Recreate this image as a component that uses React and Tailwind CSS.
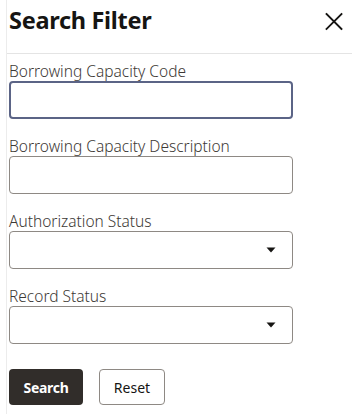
import React from "react";

function Caret() {
  return (
    <svg width="10" height="6" viewBox="0 0 10 6" className="absolute right-[16px] top-1/2 -translate-y-1/2">
      <path d="M0.5 0.5 L9.5 0.5 L5 5.5 Z" fill="#161513" />
    </svg>
  );
}

function Field({ label, select, focused }) {
  return (
    <div className="flex flex-col">
      <label className="text-[15.5px] leading-[19px] text-[#3d3935] font-light">{label}</label>
      <div
        className={
          "relative h-[38px] w-[284px] rounded-[4px] bg-white " +
          (focused ? "border-2 border-[#5b6486]" : "border border-[#8e8984]")
        }
      >
        {select && <Caret />}
      </div>
    </div>
  );
}

export default function App() {
  return (
    <div className="w-[352px] h-[414px] bg-white overflow-hidden" style={{ fontFamily: '"Noto Sans", "Open Sans", sans-serif' }}>
      <div className="ml-[6px] h-full border-l border-[#ececec]">
        <div className="h-[53px] flex items-start justify-between pl-[2px] pr-[8px] pt-[3px]">
          <h1 className="text-[23.5px] leading-[34px] font-bold text-[#161513] tracking-[-0.3px]">Search Filter</h1>
          <svg width="20" height="20" viewBox="0 0 20 20" className="mt-[9px]">
            <path d="M2.5 2 L17.5 17 M17.5 2 L2.5 17" stroke="#161513" strokeWidth="1.8" strokeLinecap="square" fill="none" />
          </svg>
        </div>
        <div className="h-px bg-[#e4e4e4]" />
        <div className="pl-[2px] pt-[8px] flex flex-col gap-[18px]">
          <Field label="Borrowing Capacity Code" focused />
          <Field label="Borrowing Capacity Description" />
          <Field label="Authorization Status" select />
          <Field label="Record Status" select />
        </div>
        <div className="pl-[2px] mt-[25px] flex gap-[16px]">
          <button className="h-[36px] w-[74px] rounded-[4px] bg-[#312d2a] text-white text-[14px] font-bold tracking-[-0.3px]">
            Search
          </button>
          <button className="h-[36px] w-[66px] rounded-[4px] border border-[#8e8984] bg-white text-[#161513] text-[14px]">
            Reset
          </button>
        </div>
      </div>
    </div>
  );
}
